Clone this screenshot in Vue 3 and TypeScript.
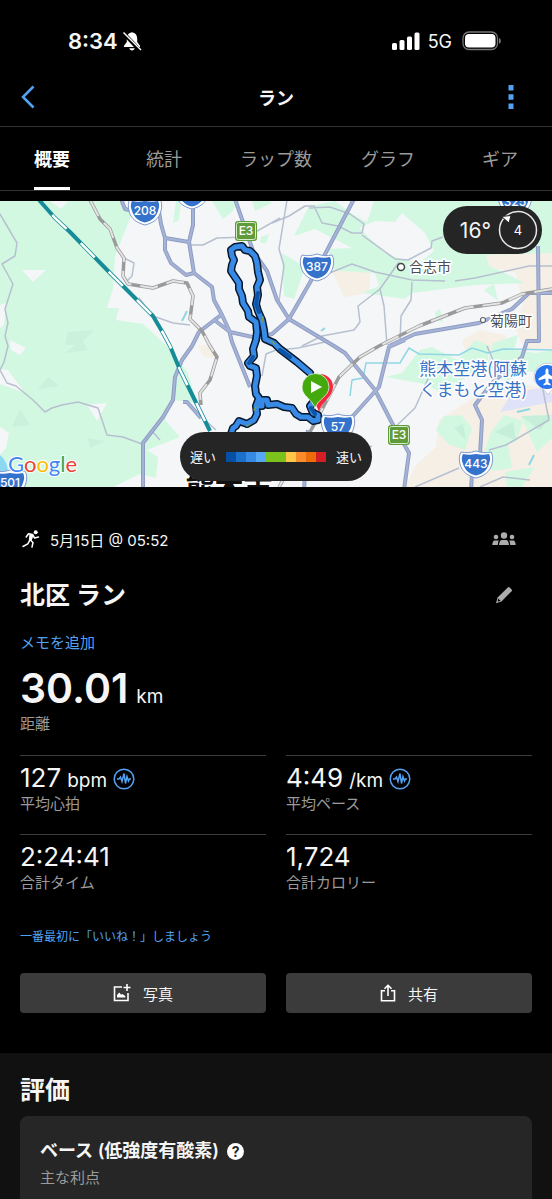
<script setup lang="ts">
import { ref } from 'vue'

interface Shield { x: number; y: number; label: string }

const tabs = ['概要', '統計', 'ラップ数', 'グラフ', 'ギア']
const activeTab = ref('概要')

const shields: Shield[] = [
  { x: 145, y: 211, label: '208' },
  { x: 192, y: 195, label: '' },
  { x: 317, y: 267, label: '387' },
  { x: 515, y: 202, label: '325' },
  { x: 338, y: 427, label: '57' },
  { x: 476, y: 464, label: '443' },
  { x: 10, y: 483, label: '501' },
]

const expressways: Shield[] = [
  { x: 246, y: 231, label: 'E3' },
  { x: 399, y: 435, label: 'E3' },
]

const roads: string[] = [
  'M121 199L125 209L133 211',
  'M157 199L161 224L165 238L189 242',
  'M165 238L165 250L171 263L186 275L194 273',
  'M193 199L193 225L189 242L194 273L212 287L214 300L222 315L229 330L232 342L250 387',
  'M221 315L199 332L192 346L182 360L175 377L173 400L163 417L143 443L143 490',
  'M213 319L230 332L257 338L272 334L289 319L312 279L354 199',
  'M235 199L253 251L267 271L277 300L289 319L334 346L345 353L375 390L392 423L409 453L404 490',
  'M405 340L389 347L379 387L352 417M389 346L415 334L479 323L512 309L529 293L552 293',
  'M538 246L539 341L527 341L522 357L492 383L475 405L482 420L480 455',
  'M472 474L471 490M308 430L304 490M183 402L187 402L201 418',
]

const railways: string[] = [
  'M90 200L100 219L110 229L117 248L124 258L123 276L128 284L153 288L173 281L187 283L193 296L190 319L202 331L210 346L217 357L210 380L200 393L201 405',
  'M552 289L522 294L502 303L465 308L419 326L379 346L360 357L339 377L315 423L279 487',
]

const expressRail = 'M39 200L55 218L70 232L111 274L138 301L153 316L163 333L170 346L180 370L210 431'

const minorRoads: string[] = [
  'M0 214L7 226L17 243L15 256L2 264L13 284L5 309L8 323L5 336L8 346L4 362L0 370L7 383L16 386L33 400L45 412L52 408L62 405L78 402L98 408L107 435L123 437L142 444',
  'M287 200L279 249L284 266L279 301',
  'M272 223L289 216L305 206L314 206L322 223L338 226L352 233L362 233L364 224L350 214L330 207L309 208',
  'M362 235L395 259L408 260L431 248L432 241L443 237',
  'M322 276L352 264L375 272L412 280L445 281M455 281L475 278L529 266L552 266',
  'M399 262L380 289L384 306L387 345M412 282L411 300L401 316L400 343',
  'M380 289L358 306L360 322L354 330L322 336L302 346',
  'M189 245L203 245L217 238L247 237L280 218',
  'M124 258L134 263L132 276L126 282M139 298L153 316L173 323L190 325',
  'M415 487L459 468M489 450L506 445L549 420L542 385M392 430L415 408L432 370',
  'M487 346L493 360M330 454L353 452L372 446M480 487L503 477L530 480',
  'M280 350L298 348L325 342M262 376L266 354L276 350M205 420L216 430M151 430L160 440',
]

const urban: string[] = [
  'M332 271L370 270L370 293L344 297Z',
  'M486 253L505 250H552V350H525L514 325L523 305L516 273L488 267Z',
  'M405 487L416 465L436 447L439 420L473 398L505 380L552 390V487Z',
  'M462 340L480 330L505 335L510 350L467 355Z',
  'M198 346L212 344L217 358L204 357Z',
]

const woods: string[] = [
  'M335 201H552V253L486 255L489 266L505 273L524 283L475 285L412 293L405 299L362 293L379 286L375 273L340 271L329 268L329 249L352 248L315 229L294 236L309 206Z',
  'M282 253L305 267L294 299L284 296Z',
  'M385 377L402 373L420 350L432 347L458 360L475 340L490 346L487 364L462 380L445 395L425 384Z',
  'M436 430L444 416L461 415L472 428L465 450L448 444Z',
  'M491 432L504 415L523 421L516 442L508 444L512 468L493 471L483 455Z',
  'M521 416L552 415V438L537 452Z M484 290L494 284L498 301Z',
  'M435 312L440 309L443 322L437 321Z M261 237L269 234L266 244L260 242Z',
  'M176 201H181L179 220L173 223Z M212 201H240L232 212L223 219Z M252 201H269L272 203L255 211Z',
  'M505 472L535 467L522 487H507Z M493 343L518 335L514 350L536 353L552 350V378L529 371L506 382L487 366Z',
]

const loopRoute =
  'M310 373L297 362L280 349L274 343L265 339L264 330L262 320L258 311L256 304L258 295L257 287L260 280L258 272L257 263L255 256L250 251L245 250L242 246L235 247L231 250L232 256L234 260L232 265L231 271L235 277L239 283L239 289L242 296L243 303L248 311L249 317L256 322L257 332L256 340L253 349L254 356L248 363L250 366L256 368L257 376L255 386L256 394L259 398L256 406L257 414L254 420L247 424L239 421L236 426L233 428L231 434'
const spurRoute =
  'M257 406L262 406L262 400L267 400L268 405L277 404L284 407L292 408L296 414L301 417L308 417L313 421L318 420L318 415L313 413L310 406L314 401'

const pace = ['#064fa5', '#1b70cb', '#3689e5', '#55a7f8', '#7bc31c', '#7bc31c', '#ffc746', '#fb8c2b', '#ee6b09', '#d61f25']
</script>

<template>
  <main class="screen">
    <div class="status">
      <div class="status-side">
        <span class="clock">8:34</span>
        <svg class="bell" viewBox="0 0 20 20" aria-hidden="true">
          <path d="M10 1.2c-3.4.5-5.2 3-5.2 6.300v3.500L2 14.700V16h16v-1.300L15.200 11V7.500C15.200 4.200 13.400 1.700 10 1.200zM7.300 17.200h5.400c-.3 1.400-1.300 2.200-2.700 2.200s-2.400-.8-2.700-2.200z" fill="#fff" />
          <path d="M1 1.500L18 19.500" stroke="#000" stroke-width="4" />
          <path d="M1.500 1.500L19 19" stroke="#fff" stroke-width="1.500" />
        </svg>
      </div>
      <div class="status-side">
        <svg class="bars" viewBox="0 0 28 19" aria-hidden="true">
          <rect x="0" y="11" width="5" height="7" rx="1.500" fill="#fff" />
          <rect x="7.500" y="8" width="5" height="10" rx="1.500" fill="#fff" />
          <rect x="15" y="4.500" width="5" height="13.500" rx="1.500" fill="#fff" />
          <rect x="22.500" y="0.500" width="5" height="17.500" rx="1.500" fill="#fff" />
        </svg>
        <span class="network">5G</span>
        <svg class="battery" viewBox="0 0 40 20" aria-hidden="true">
          <rect x="1" y="1" width="34.500" height="17.500" rx="6" fill="none" stroke="#777" stroke-width="1.300" />
          <rect x="3" y="3" width="30.500" height="13.500" rx="4" fill="#fff" />
          <path d="M37 7c2.500.8 2.500 5 0 5.800z" fill="#777" />
        </svg>
      </div>
    </div>

    <header class="bar">
      <button class="icon-button" type="button" aria-label="戻る">
        <svg width="16" height="24" viewBox="0 0 16 24"><path d="M13.500 1.500L3 12L13.500 22.500" fill="none" stroke="#53a2f2" stroke-width="2.600" /></svg>
      </button>
      <h1 class="bar-title">ラン</h1>
      <button class="icon-button end" type="button" aria-label="メニュー">
        <svg width="6" height="24" viewBox="0 0 6 24" fill="#53a2f2"><path d="M.5 0h5v5.500h-5zM.5 9.200h5v5.500h-5zM.5 18.400h5V24h-5z" /></svg>
      </button>
    </header>

    <nav class="tabs" role="tablist">
      <button
        v-for="tab in tabs"
        :key="tab"
        type="button"
        role="tab"
        class="tab"
        :class="{ active: activeTab === tab }"
        :aria-selected="activeTab === tab"
        @click="activeTab = tab"
      >{{ tab }}</button>
    </nav>

    <section class="map" aria-label="コース">
      <svg class="map-art" viewBox="0 201 552 286" preserveAspectRatio="xMidYMid slice">
        <rect y="201" width="552" height="286" fill="#f5f6f7" />
        <path fill="#d3f8e2" d="M0 201H122L131 216L115 256L113 289L107 308L119 308L116 320L143 324L167 346L188 373L197 403L173 400L165 420L180 437L147 450L158 457L156 478L140 474L113 487H0Z" />
        <path fill="#f5f6f7" d="M50 201H68L61 209ZM22 270H46L33 282ZM87 405L107 403L97 421ZM10 340L26 348L20 355L11 350ZM0 305L6 303L4 325L0 328ZM0 369L8 370L25 393L0 384ZM0 427L9 433L6 448L0 455Z" />
        <path fill="#c9f1dc" d="M38 389L48 377L59 386ZM68 332L94 330L79 345L65 345ZM12 427L20 410L30 425ZM65 353L82 340L88 350ZM88 438L105 441L90 448Z" />
        <path d="M0 455Q8 461 8 474L0 476Z" fill="#8bd8f2" />
        <path v-for="d in urban" :key="d" :d="d" fill="#f5efe6" />
        <path v-for="d in woods" :key="d" :d="d" fill="#d3f8e2" />
        <path fill="#f5f6f7" d="M359 228L375 221L395 222L402 213L425 233L434 251L419 263L402 259L385 253ZM335 201H374L367 222L352 214Z" />
        <path fill="#c5efd9" d="M495 432L513 422L516 440ZM521 416L552 415L540 430ZM454 428L463 424L466 440Z" />
        <path fill="#dfe2f8" d="M500 412L512 393L541 388L552 394V402Z" />
        <g fill="none" stroke="#8fd7e4" stroke-width="2">
          <path d="M350 396L352 380L363 378L366 363L400 363L409 348L419 354L459 355L472 348L488 353L503 349L552 350" stroke-width="1.500" />
          <path d="M517 412L530 409M534 455L529 465M182 321L187 311M321 331L325 328" />
        </g>
        <path v-for="d in minorRoads" :key="d" :d="d" fill="none" stroke="#b7c0d0" stroke-width="1.500" stroke-linejoin="round" />
        <g fill="none" stroke-linejoin="round">
          <path v-for="d in roads" :key="d" :d="d" stroke="#8f9dc4" stroke-width="4" />
          <path v-for="d in roads" :key="d + 'fill'" :d="d" stroke="#a5b3d6" stroke-width="2" />
          <g v-for="d in railways" :key="d">
            <path :d="d" stroke="#9a9a9a" stroke-width="3.500" />
            <path :d="d" stroke="#e4e4e4" stroke-width="2" stroke-dasharray="18 9" />
          </g>
          <path :d="expressRail" stroke="#168c98" stroke-width="4" />
          <path :d="expressRail" stroke="#fff" stroke-width="2.500" stroke-dasharray="20 20" stroke-dashoffset="20" />
        </g>

        <g class="place">
          <circle cx="401" cy="267" r="3.500" fill="#fff" stroke="#444" stroke-width="1.500" />
          <text x="409" y="272" font-size="14">合志市</text>
          <circle cx="483" cy="320" r="2.500" fill="#fff" stroke="#666" stroke-width="1.200" />
          <text x="490" y="326" font-size="14">菊陽町</text>
          <g class="airport" font-size="17" text-anchor="end">
            <text x="527" y="375">熊本空港(阿蘇</text>
            <text x="527" y="396">くまもと空港)</text>
          </g>
          <text class="city" x="229" y="500" font-size="29" text-anchor="middle">熊本市</text>
        </g>

        <g fill="none" stroke-linejoin="round" stroke-linecap="round">
          <path :d="loopRoute" stroke="#07172c" stroke-width="8" />
          <path :d="spurRoute" stroke="#07172c" stroke-width="8" />
          <path :d="loopRoute" stroke="#378be6" stroke-width="5" />
          <path :d="spurRoute" stroke="#378be6" stroke-width="5" />
          <path d="M258 293L256 304L259 312M253 357L249 363M311 408L315 414M280 350L290 357" stroke="#0d55a8" stroke-width="4" />
          <path d="M263 317L262 322M271 341L275 344M247 426L250 424M254 410L256 407" stroke="#7a9c52" stroke-width="1.500" />
        </g>

        <path d="M319 412C316 401 307 398 307 387A13 13 0 0 1 333 387C333 397 321 402 319 412Z" fill="#f3283d" />
        <path d="M315 409C313 399 302 397 302 387A13.500 13.500 0 0 1 329 387C329 397 317 399 315 409Z" fill="#43a90c" stroke="#fff" stroke-width="0.700" />
        <path d="M311 381L322 387L311 393Z" fill="#fff" />

        <g v-for="s in shields" :key="s.label" :transform="`translate(${s.x} ${s.y})`">
          <path d="M0-13C6-11 10-11 15-12C17-9 17-4 16 0C14 8 8 12 0 14C-8 12-14 8-16 0C-17-4-17-9-15-12C-10-11-6-11 0-13Z" fill="#fff" stroke="#7d99cc" stroke-width="1" />
          <path d="M0-10C5-9 9-9 13-10C15-6 14-3 13 0C11 6 7 10 0 11.500C-7 10-11 6-13 0C-14-3-15-6-13-10C-9-9-5-9 0-10Z" fill="#3472cb" />
          <text v-if="s.label" class="road-number" y="4">{{ s.label }}</text>
        </g>
        <g v-for="e in expressways" :key="e.x" :transform="`translate(${e.x} ${e.y})`">
          <rect x="-11" y="-10" width="22" height="20" rx="3" fill="#5f9a3b" />
          <rect x="-9.500" y="-8.500" width="19" height="17" rx="2" fill="none" stroke="#d9ecc9" stroke-width="1" />
          <text class="road-number" y="4">{{ e.label }}</text>
        </g>

        <path d="M548 395C544 387 534 386 534 377A14 14 0 1 1 562 377C562 386 552 387 548 395Z" fill="#fff" stroke="#ccd" />
        <circle cx="547" cy="377" r="12" fill="#2475ee" />
        <path d="M547 368l1.500 2v4l7 4.500v2l-7-2v4l2 1.500v1.500l-3.500-1-3.500 1V384l2-1.500v-4l-7 2v-2l7-4.500v-4z" fill="#fff" />

        <text class="google" x="8" y="472">
          <tspan fill="#4285f4">G</tspan><tspan fill="#ea4335">o</tspan><tspan fill="#fbbc04">o</tspan><tspan fill="#4285f4">g</tspan><tspan fill="#34a853">l</tspan><tspan fill="#ea4335">e</tspan>
        </text>
      </svg>

      <div class="weather">
        <span class="temperature">16°</span>
        <svg width="40" height="40" viewBox="0 0 40 40" aria-label="風速 4">
          <circle cx="20" cy="20" r="18.500" fill="none" stroke="#e8e8e8" stroke-width="1.500" />
          <path d="M3.500 6.500L13 5.500L11 13Z" fill="#fff" stroke="#252525" stroke-width="1" />
          <text x="20" y="25" text-anchor="middle" font-size="13" fill="#fff">4</text>
        </svg>
      </div>

      <div class="legend">
        <span>遅い</span>
        <span class="scale"><i v-for="(c, i) in pace" :key="i" :style="{ background: c }"></i></span>
        <span>速い</span>
      </div>
    </section>

    <section class="summary">
      <div class="line meta">
        <svg class="runner" viewBox="0 0 18 18" aria-hidden="true">
          <circle cx="13.700" cy="2.300" r="2" fill="#fff" />
          <path d="M4.200 7L6.500 3.800L10.500 4.500L8 9.800L11 12.500L10 17M8 9.800L5.800 13.800L1 16.500M10.500 4.500L12.600 8L16.500 7" fill="none" stroke="#fff" stroke-width="1.500" stroke-linejoin="round" stroke-linecap="round" />
          <path d="M7.500 4L11.800 5L9.500 11L6.800 9.500Z" fill="#fff" />
        </svg>
        <span class="date">5月15日 @ 05:52</span>
        <button class="side-button" type="button" aria-label="公開範囲">
          <svg width="24" height="14" viewBox="0 0 24 14" fill="#acacac">
            <circle cx="12" cy="3.500" r="3.200" /><circle cx="4" cy="5" r="2.300" /><circle cx="20" cy="5" r="2.300" />
            <path d="M7 13C7.300 9.500 8.500 8 10 8h4c1.500 0 2.700 1.500 3 5zM.3 13C.5 10 1.300 8.500 2.700 8.500h4C6 10 5.900 11.500 5.800 13zM23.700 13c-.2-3-1-4.500-2.400-4.500h-4c.7 1.500.8 3 .9 4.500z" />
          </svg>
        </button>
      </div>

      <div class="line title-line">
        <h2 class="title">北区 ラン</h2>
        <button class="side-button" type="button" aria-label="名前を編集">
          <svg width="18" height="18" viewBox="0 0 18 18"><path d="M1 17.200L2.600 11.500L12.800 1.400Q13.700.6 14.600 1.400L16.600 3.400Q17.400 4.300 16.600 5.200L6.500 15.400Z" fill="#acacac" /><path d="M3.100 12.500L5.600 15L2.800 15.500Z" fill="#000" /></svg>
        </button>
      </div>

      <a class="note" href="#note">メモを追加</a>

      <div class="distance"><strong>30.01</strong><span class="unit">km</span></div>
      <div class="label">距離</div>

      <dl class="stats">
        <div class="stat">
          <dd class="value">127<span class="unit">bpm</span>
            <svg class="pulse" viewBox="0 0 22 22" aria-hidden="true"><circle cx="11" cy="11" r="9.800" /><path d="M4 11H6L7.500 9L9 13.500L11 5.500L12.500 15.500L14 8.500L15.500 13L16.500 11H18" /></svg>
          </dd>
          <dt class="label">平均心拍</dt>
        </div>
        <div class="stat">
          <dd class="value">4:49<span class="unit">/km</span>
            <svg class="pulse" viewBox="0 0 22 22" aria-hidden="true"><circle cx="11" cy="11" r="9.800" /><path d="M4 11H6L7.500 9L9 13.500L11 5.500L12.500 15.500L14 8.500L15.500 13L16.500 11H18" /></svg>
          </dd>
          <dt class="label">平均ペース</dt>
        </div>
        <div class="stat">
          <dd class="value">2:24:41</dd>
          <dt class="label">合計タイム</dt>
        </div>
        <div class="stat">
          <dd class="value">1,724</dd>
          <dt class="label">合計カロリー</dt>
        </div>
      </dl>

      <a class="like" href="#like">一番最初に「いいね！」しましょう</a>

      <div class="actions">
        <button class="action" type="button">
          <svg width="18" height="18" viewBox="0 0 18 18" fill="none" stroke="#fff" stroke-width="1.600"><path d="M9 3H1.500V16.500H15V9M10.500 3.500H17.500M14 0V7" /><path d="M4 13.500V11L6.200 8.500L8.200 10.800L9.300 10L12.300 12V13.500Z" fill="#fff" stroke="none" /></svg>
          写真
        </button>
        <button class="action" type="button">
          <svg width="16" height="18" viewBox="0 0 16 18" fill="none" stroke="#fff" stroke-width="1.600"><path d="M5 6.800H1.500V16.800H14.500V6.800H11M8 12V1.800M4.500 4.800L8 1.300L11.500 4.800" /></svg>
          共有
        </button>
      </div>
    </section>

    <section class="rating">
      <h2 class="title">評価</h2>
      <div class="card">
        <h3 class="card-title">
          ベース (低強度有酸素)
          <button class="help" type="button" aria-label="ヘルプ">?</button>
        </h3>
        <p class="label">主な利点</p>
      </div>
    </section>
  </main>
</template>

<style>
body {
  margin: 0;
  background: #111;
}
</style>

<style scoped>
.screen {
  min-height: 100vh;
  overflow: hidden;
  background: #000;
  color: #f5f5f5;
  font-family: Inter, "Noto Sans CJK JP", sans-serif;
}
button {
  margin: 0;
  padding: 0;
  border: 0;
  background: none;
  color: inherit;
  font: inherit;
}
svg {
  flex: none;
}
h1, h2, h3, p, dl, dd {
  margin: 0;
}
a {
  color: #53a2f2;
  text-decoration: none;
}

.status {
  display: flex;
  justify-content: space-between;
  align-items: center;
  height: 68px;
  padding: 14px 50px 0 68px;
  box-sizing: border-box;
}
.status-side {
  display: flex;
  align-items: center;
}
.clock {
  font-size: 22px;
  font-weight: 600;
}
.bell {
  width: 20px;
  height: 20px;
  margin-left: 4px;
}
.bars {
  width: 28px;
  height: 19px;
}
.network {
  margin: 0 10px 0 8px;
  font-size: 18px;
}
.battery {
  width: 40px;
  height: 20px;
}

.bar {
  display: grid;
  grid-template-columns: 1fr auto 1fr;
  align-items: center;
  height: 59px;
  padding: 0 38px 0 20px;
  border-bottom: 1px solid #333;
  box-sizing: border-box;
}
.icon-button {
  display: flex;
  justify-self: start;
}
.icon-button.end {
  justify-self: end;
}
.bar-title {
  padding-left: 18px;
  font-size: 18px;
  font-weight: 700;
}

.tabs {
  display: grid;
  grid-template-columns: repeat(5, 1fr);
  height: 64px;
  margin: 0 -4px;
  border-bottom: 1px solid #333;
  box-sizing: border-box;
}
.tab {
  justify-self: center;
  border-top: 1px solid transparent;
  border-bottom: 3px solid transparent;
  color: #9b9b9b;
  font-size: 18px;
}
.tab.active {
  border-bottom-color: #fff;
  color: #fff;
  font-weight: 700;
}

.map {
  position: relative;
  margin-top: 10px;
}
.map-art {
  display: block;
  width: 100%;
  height: 286px;
}
.place text {
  fill: #4a4d52;
  stroke: #fff;
  stroke-width: 3px;
  paint-order: stroke;
  font-family: "Noto Sans CJK JP", sans-serif;
}
.place .airport text {
  fill: #3973c4;
}
.place .city {
  fill: #111;
  font-weight: 700;
}
.road-number {
  fill: #fff;
  font-size: 12px;
  font-weight: 500;
  text-anchor: middle;
}
.google {
  stroke: #fff;
  stroke-width: 2px;
  paint-order: stroke;
  font-family: Lato, sans-serif;
  font-size: 22px;
}
.weather {
  position: absolute;
  top: 5px;
  right: 10px;
  display: flex;
  justify-content: flex-end;
  align-items: center;
  gap: 7px;
  width: 99px;
  height: 48px;
  padding-right: 4px;
  border-radius: 24px;
  background: #252525;
  box-sizing: border-box;
}
.temperature {
  font-size: 21px;
}
.legend {
  position: absolute;
  bottom: 6px;
  left: 50%;
  display: flex;
  justify-content: center;
  align-items: center;
  gap: 10px;
  width: 192px;
  height: 49px;
  transform: translateX(-50%);
  border-radius: 25px;
  background: #252525;
  font-size: 13px;
}
.scale {
  display: flex;
}
.scale i {
  width: 10px;
  height: 10px;
}

.summary {
  padding: 39px 20px 40px;
}
.line {
  display: flex;
  align-items: center;
}
.meta {
  height: 26px;
}
.runner {
  width: 18px;
  height: 18px;
  margin-left: 2px;
}
.date {
  margin-left: 10px;
  font-size: 15px;
}
.side-button {
  display: flex;
  justify-content: center;
  width: 24px;
  margin: 0 16px 0 auto;
}
.title {
  font-size: 25px;
  font-weight: 700;
  line-height: 36px;
}
.title-line {
  margin-top: 25px;
}
.note {
  display: block;
  margin-top: 20px;
  font-size: 15px;
  line-height: 20px;
}
.distance {
  display: flex;
  align-items: baseline;
  gap: 8px;
  margin-top: 18px;
  line-height: 34px;
}
.distance strong {
  font-size: 41px;
  font-weight: 600;
}
.unit {
  font-size: 19px;
}
.label {
  color: #9b9b9b;
  font-size: 15px;
  line-height: 20px;
}
.stats {
  display: grid;
  grid-template-columns: 1fr 1fr;
  column-gap: 20px;
  margin-top: 21px;
}
.stat {
  display: flex;
  flex-direction: column;
  height: 79px;
  padding-top: 7px;
  border-top: 1px solid #3c3c3c;
  box-sizing: border-box;
}
.value {
  display: flex;
  align-items: baseline;
  gap: 6px;
  height: 31px;
  font-size: 26px;
  line-height: 30px;
}
.pulse {
  align-self: center;
  width: 22px;
  height: 22px;
  fill: none;
  stroke: #53a2f2;
  stroke-width: 1.500px;
}
.like {
  display: block;
  margin-top: 14px;
  font-size: 12px;
  line-height: 20px;
}
.actions {
  display: grid;
  grid-template-columns: 1fr 1fr;
  gap: 20px;
  margin-top: 26px;
}
.action {
  display: flex;
  justify-content: center;
  align-items: center;
  gap: 12px;
  height: 40px;
  border-radius: 4px;
  background: #3b3b3b;
  font-size: 15px;
}

.rating {
  padding: 19px 20px 0;
  background: #111;
}
.card {
  min-height: 120px;
  margin-top: 8px;
  padding: 22px 20px;
  border-radius: 8px;
  background: #262626;
  box-sizing: border-box;
}
.card-title {
  display: flex;
  align-items: center;
  gap: 8px;
  margin-bottom: 4px;
  font-size: 18px;
  font-weight: 600;
  line-height: 26px;
}
.help {
  width: 17px;
  height: 17px;
  border-radius: 50%;
  background: #fff;
  color: #262626;
  font-size: 14px;
  font-weight: 700;
  line-height: 17px;
}
</style>
